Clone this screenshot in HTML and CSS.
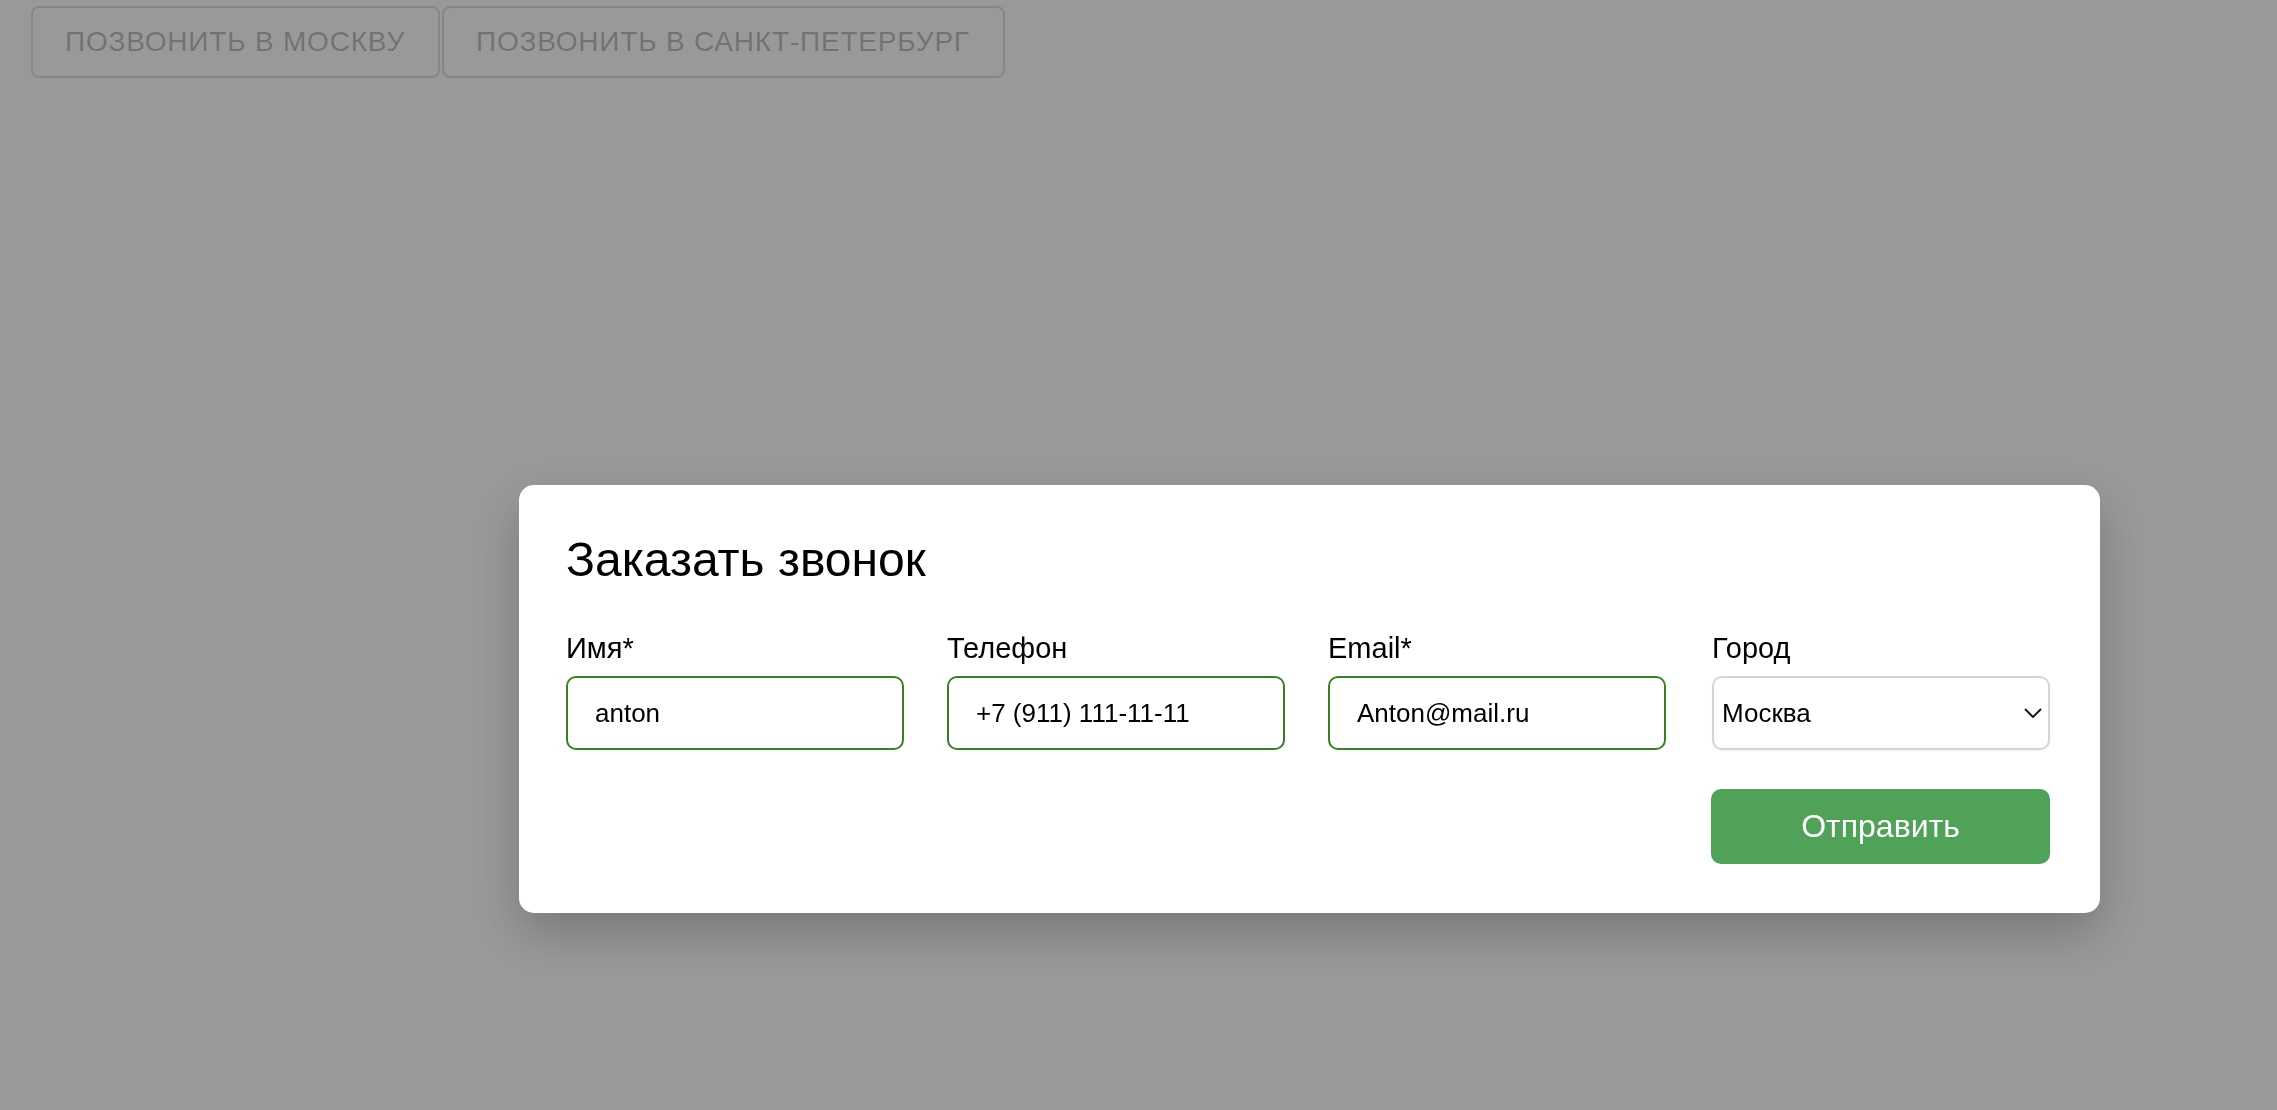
FILE: index.html
```html
<!DOCTYPE html>
<html lang="ru">
<head>
<meta charset="utf-8">
<title>Заказать звонок</title>
<link rel="stylesheet" href="styles.css">
</head>
<body>
<div class="toolbar">
  <button class="call-btn" disabled>Позвонить в Москву</button>
  <button class="call-btn" disabled>Позвонить в Санкт-Петербург</button>
</div>

<div class="overlay">
  <div class="modal">
    <h2 class="modal-title">Заказать звонок</h2>
    <form class="form">
      <div class="field">
        <label class="label">Имя*</label>
        <input class="input" type="text" value="anton">
      </div>
      <div class="field">
        <label class="label">Телефон</label>
        <input class="input" type="text" value="+7 (911) 111-11-11">
      </div>
      <div class="field">
        <label class="label">Email*</label>
        <input class="input" type="text" value="Anton@mail.ru">
      </div>
      <div class="field field-city">
        <label class="label">Город</label>
        <div class="select-wrap">
          <select class="select">
            <option>Москва</option>
            <option>Санкт-Петербург</option>
          </select>
          <svg class="chevron" width="18" height="10" viewBox="0 0 18 10" aria-hidden="true">
            <path d="M1 1 L9 9 L17 1" fill="none" stroke="#1a1a1a" stroke-width="2"/>
          </svg>
        </div>
      </div>
      <button type="button" class="submit">Отправить</button>
    </form>
  </div>
</div>
</body>
</html>
```

FILE: styles.css
```css
* { box-sizing: border-box; }

html, body {
  margin: 0;
  padding: 0;
  background: #ffffff;
  font-family: "Liberation Sans", Arial, sans-serif;
}

.toolbar {
  display: flex;
  gap: 2px;
  padding: 6px 0 0 31px;
}

.call-btn {
  height: 72px;
  padding: 0 33px 0 32px;
  font-family: "Liberation Sans", Arial, sans-serif;
  font-size: 28px;
  letter-spacing: 0.8px;
  text-transform: uppercase;
  color: rgba(0, 0, 0, 0.27);
  background: transparent;
  border: 2px solid rgba(0, 0, 0, 0.12);
  border-radius: 8px;
}

.overlay {
  position: fixed;
  inset: 0;
  background: rgba(0, 0, 0, 0.4);
}

.modal {
  position: absolute;
  left: 519px;
  top: 485px;
  width: 1581px;
  padding: 51px 50px 49px 47px;
  background: #ffffff;
  border-radius: 15px;
  box-shadow: 0 20px 50px rgba(0, 0, 0, 0.22);
}

.modal-title {
  margin: 0 0 50px 0;
  font-size: 48px;
  line-height: 48px;
  font-weight: 400;
  color: #000;
}

.form {
  display: grid;
  grid-template-columns: 338px 338px 338px 341px;
  column-gap: 43px;
  row-gap: 39px;
}

.field {
  display: flex;
  flex-direction: column;
  gap: 13px;
}

.field-city {
  width: 338px;
  justify-self: end;
}

.label {
  font-size: 29px;
  line-height: 29px;
  color: #000;
}

.input {
  height: 74px;
  width: 100%;
  padding: 0 0 0 27px;
  font-family: "Liberation Sans", Arial, sans-serif;
  font-size: 26px;
  color: #000;
  border: 2px solid #3b7f25;
  border-radius: 10px;
  background: #fff;
  outline: none;
}

.select-wrap {
  position: relative;
}

.select {
  appearance: none;
  -webkit-appearance: none;
  height: 74px;
  width: 100%;
  padding: 0 0 0 8px;
  font-family: "Liberation Sans", Arial, sans-serif;
  font-size: 26px;
  color: #000;
  background: #fff;
  border: 2px solid #d3d5dc;
  border-radius: 10px;
  box-shadow: 0 1px 2px rgba(0, 0, 0, 0.06);
  outline: none;
}

.chevron {
  position: absolute;
  right: 8px;
  top: 32px;
  pointer-events: none;
}

.submit {
  grid-column: 4;
  justify-self: end;
  height: 75px;
  width: 339px;
  font-family: "Liberation Sans", Arial, sans-serif;
  font-size: 32px;
  color: #fff;
  background: #4fa257;
  border: none;
  border-radius: 10px;
}
```
